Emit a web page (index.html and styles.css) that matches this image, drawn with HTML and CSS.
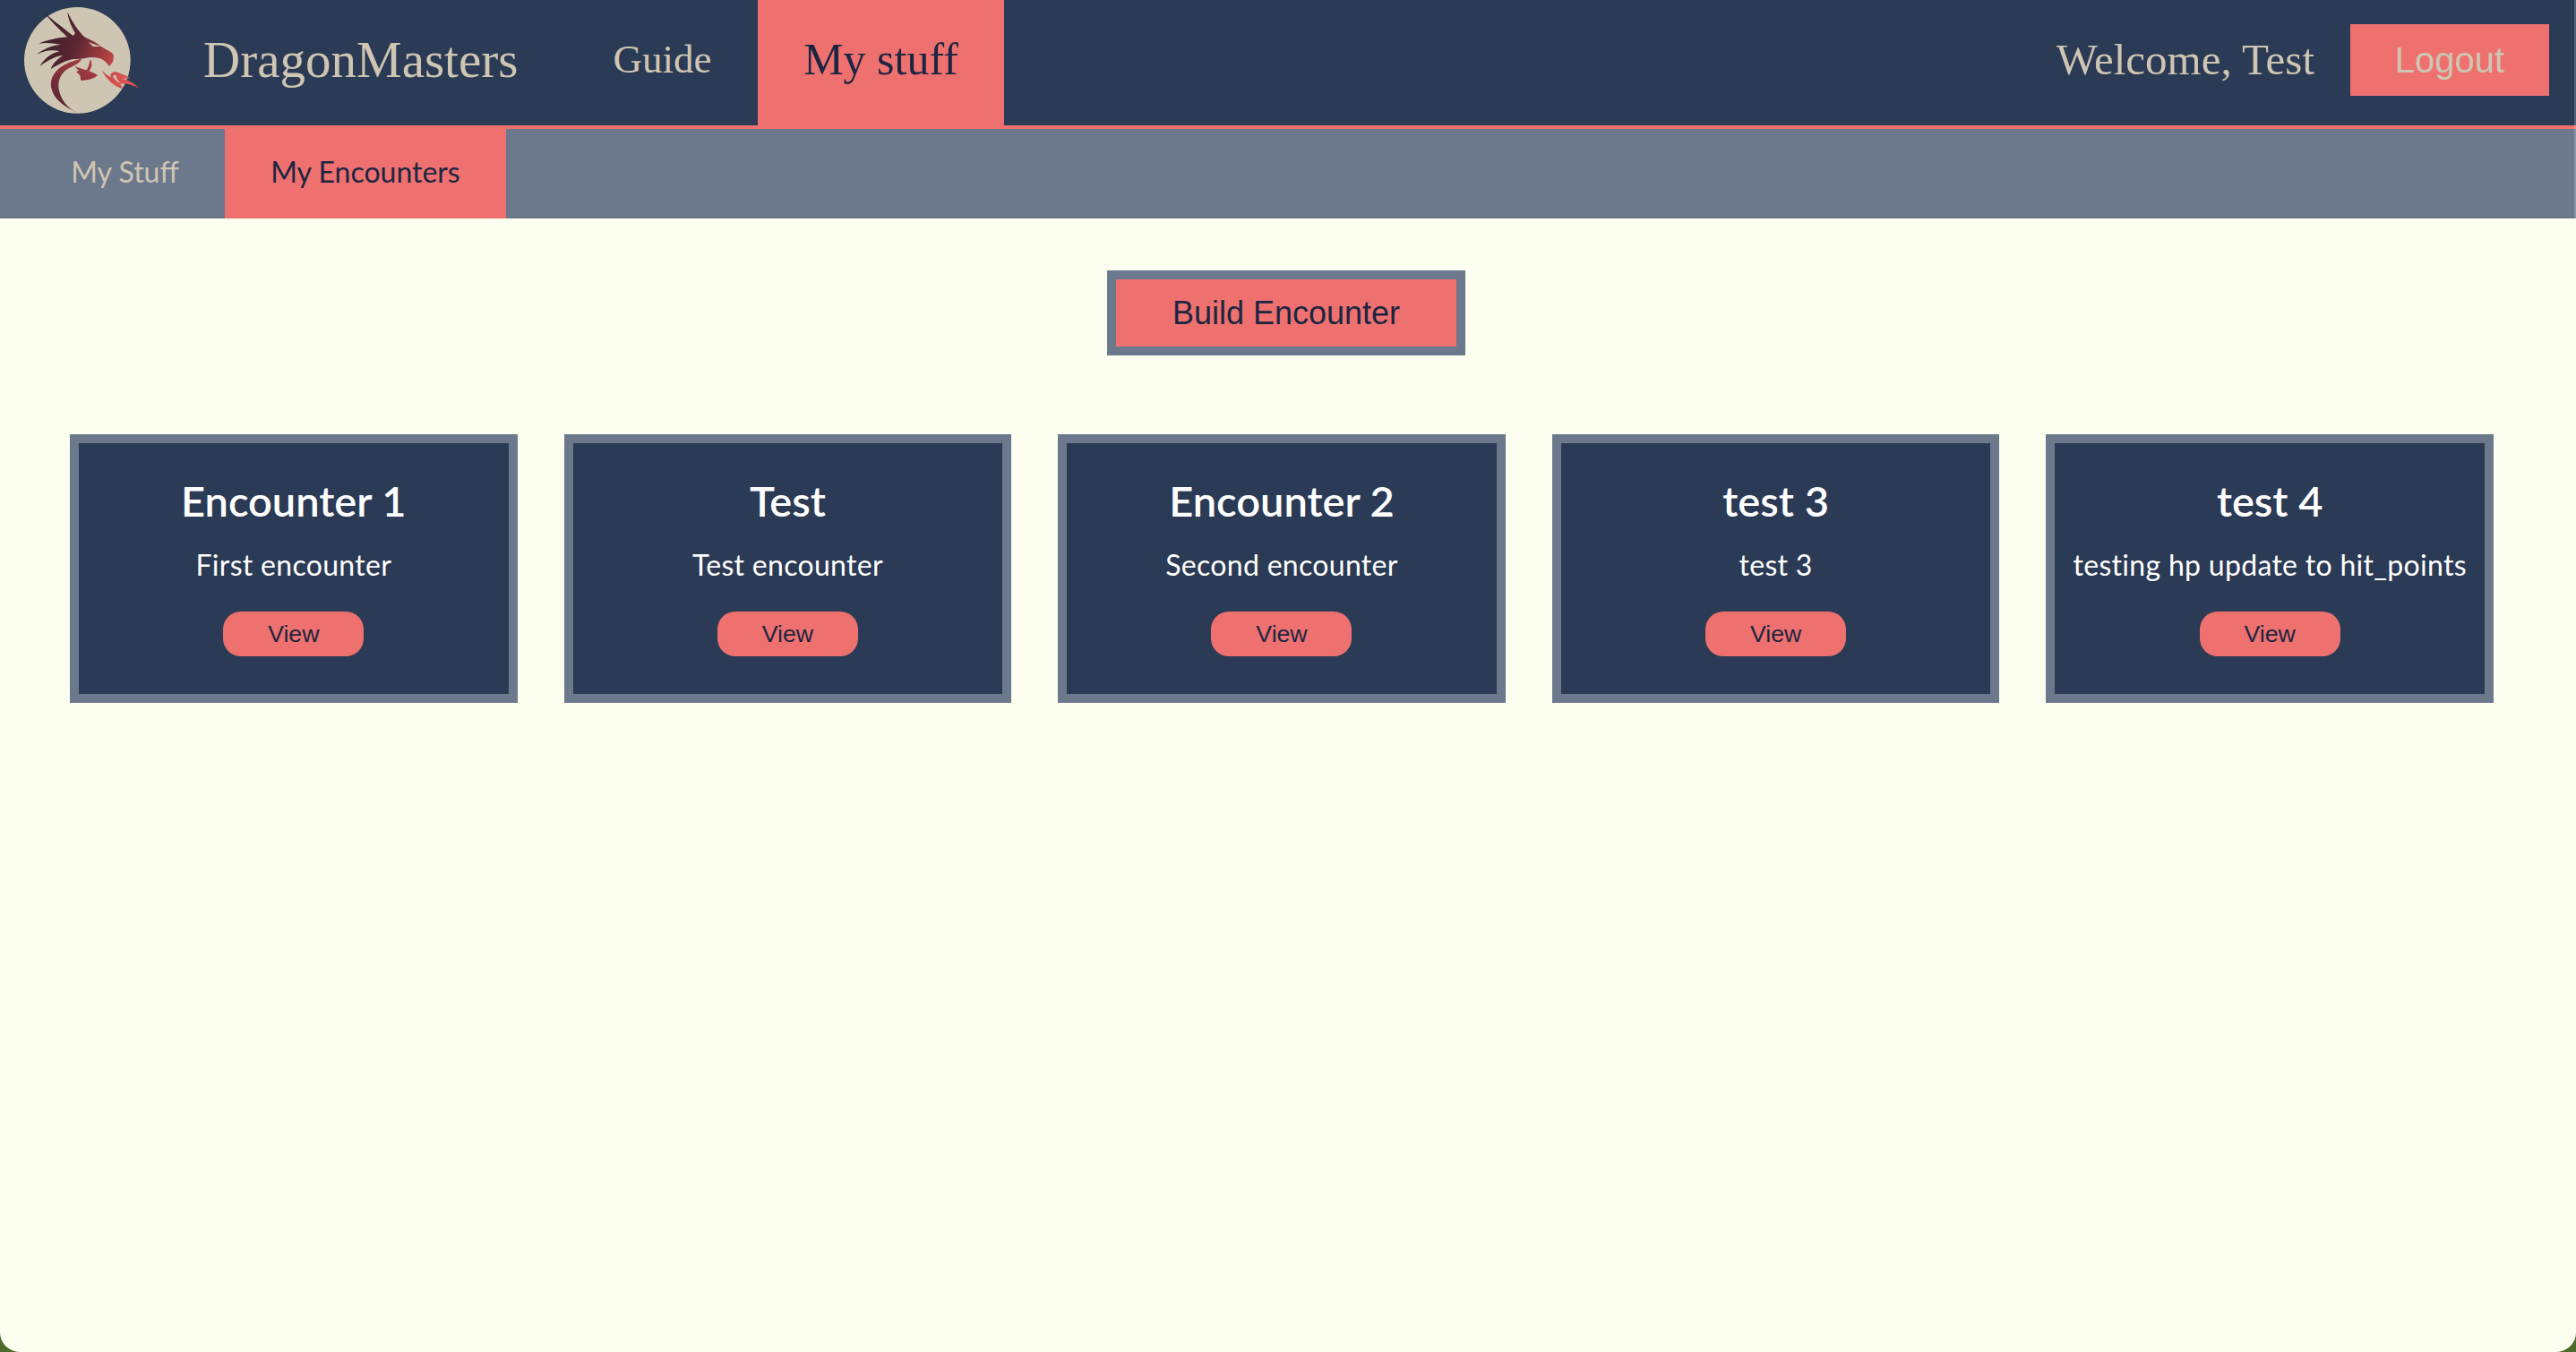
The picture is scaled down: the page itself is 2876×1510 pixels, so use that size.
FILE: index.html
```html
<!DOCTYPE html>
<html lang="en">
<head>
<meta charset="utf-8">
<title>DragonMasters</title>
<link rel="stylesheet" href="styles.css">
</head>
<body>
<div class="app">
  <header class="topbar">
    <a class="logo" href="#">
      <svg class="logo-svg" viewBox="0 0 510 435" width="170" height="145" aria-hidden="true">
        <defs>
          <linearGradient id="dragon" gradientUnits="userSpaceOnUse" x1="130" y1="130" x2="390" y2="220">
            <stop offset="0" stop-color="#3a1f2c"/>
            <stop offset="0.45" stop-color="#5c2632"/>
            <stop offset="1" stop-color="#c94a48"/>
          </linearGradient>
          <linearGradient id="tail" gradientUnits="userSpaceOnUse" x1="170" y1="380" x2="310" y2="200">
            <stop offset="0" stop-color="#4a2130"/>
            <stop offset="1" stop-color="#b03f42"/>
          </linearGradient>
          <linearGradient id="flame" gradientUnits="userSpaceOnUse" x1="340" y1="235" x2="467" y2="296">
            <stop offset="0" stop-color="#c9494a"/>
            <stop offset="1" stop-color="#e45a55"/>
          </linearGradient>
        </defs>
        <circle cx="259" cy="202" r="178" fill="#cec6b2"/>
        <path fill="url(#dragon)" d="M147 42C175 66 215 96 245 120L252 112C240 90 228 65 226 40C240 70 262 105 283 124C300 132 322 142 338 155C352 165 372 172 378 180C384 195 380 210 365 222C360 212 352 205 345 200C330 192 305 190 285 195C270 198 255 198 245 198C220 203 190 218 170 232C175 215 190 200 210 185C180 190 155 205 133 222C148 198 170 178 200 172C175 165 145 170 122 183C145 165 175 150 205 150C180 145 155 142 130 146C155 135 190 127 225 124C200 100 170 70 147 42Z"/>
        <path fill="#cec6b2" d="M296 141L338 156L312 156Z"/>
        <path fill="url(#tail)" d="M274 197C235 205 188 222 173 265C162 305 190 350 265 380C225 365 205 335 197 300C192 265 207 240 237 225C252 218 267 210 274 197Z"/>
        <path fill="url(#tail)" d="M303 198C310 212 308 228 298 238C310 243 320 247 327 252C318 262 300 268 271 270L268 252L255 240L264 237L250 222L278 232C286 236 292 234 294 228C298 218 300 208 303 198Z"/>
        <path fill="url(#flame)" fill-rule="evenodd" d="M340 235C352 247 362 256 372 258C368 250 372 243 384 240C402 243 420 253 437 262L410 264C432 268 452 282 467 296C445 284 425 278 404 281L412 298C385 292 360 270 340 235ZM378 256C384 268 394 276 404 280C396 272 388 262 388 250C384 252 380 253 378 256Z"/>
      </svg>
    </a>
    <nav class="main-nav">
      <a class="brand" href="#">DragonMasters</a>
      <a class="nav-link" href="#">Guide</a>
      <a class="nav-link nav-active" href="#">My stuff</a>
    </nav>
    <div class="user-area">
      <span class="welcome">Welcome, Test</span>
      <button class="logout" type="button">Logout</button>
    </div>
  </header>
  <nav class="subnav">
    <a class="sub-link" href="#">My Stuff</a>
    <a class="sub-link sub-active" href="#">My Encounters</a>
  </nav>
  <main class="content">
    <div class="build-row">
      <button class="build" type="button">Build Encounter</button>
    </div>
    <section class="cards">
      <article class="card">
        <h2 class="card-title">Encounter 1</h2>
        <p class="card-desc">First encounter</p>
        <button class="view" type="button">View</button>
      </article>
      <article class="card">
        <h2 class="card-title">Test</h2>
        <p class="card-desc">Test encounter</p>
        <button class="view" type="button">View</button>
      </article>
      <article class="card">
        <h2 class="card-title">Encounter 2</h2>
        <p class="card-desc">Second encounter</p>
        <button class="view" type="button">View</button>
      </article>
      <article class="card">
        <h2 class="card-title">test 3</h2>
        <p class="card-desc">test 3</p>
        <button class="view" type="button">View</button>
      </article>
      <article class="card">
        <h2 class="card-title">test 4</h2>
        <p class="card-desc">testing hp update to hit_points</p>
        <button class="view" type="button">View</button>
      </article>
    </section>
  </main>
</div>
</body>
</html>
```
FILE: styles.css
```css
html {
  height: 100%;
  background: #4c6a2a;
}
body {
  margin: 0;
  height: 100%;
  overflow: hidden;
}
a {
  text-decoration: none;
}
.app {
  position: relative;
  height: 100%;
  display: flex;
  flex-direction: column;
  background: #fcfff0;
  border-radius: 0 0 22px 22px;
  overflow: hidden;
}
.app::after {
  content: "";
  position: absolute;
  top: 0;
  right: 0;
  bottom: 0;
  width: 2px;
  background: rgba(255, 255, 255, 0.2);
}
.topbar {
  height: 140px;
  flex: none;
  display: flex;
  align-items: stretch;
  background: #2b3a55;
  border-bottom: 4px solid #ee716f;
  font-family: "Liberation Serif", serif;
  color: #cec6b2;
}
.logo {
  width: 170px;
  flex: none;
  display: flex;
  align-items: flex-start;
}
.logo-svg {
  display: block;
}
.main-nav {
  display: flex;
  align-items: stretch;
}
.brand {
  width: 463px;
  padding: 0 0 8px 57px;
  box-sizing: border-box;
  display: flex;
  align-items: center;
  color: #cec6b2;
  font-size: 57px;
}
.nav-link {
  width: 213px;
  padding-bottom: 8px;
  box-sizing: border-box;
  display: flex;
  align-items: center;
  justify-content: center;
  color: #cec6b2;
  font-size: 45px;
}
.nav-active {
  width: 275px;
  background: #ee716f;
  color: #1c2541;
  font-size: 50px;
}
.user-area {
  margin-left: auto;
  padding: 0 30px 6px 0;
  display: flex;
  align-items: center;
  gap: 40px;
}
.welcome {
  font-size: 49px;
  padding-bottom: 2px;
}
.logout {
  width: 222px;
  height: 80px;
  border: 0;
  padding: 0;
  background: #ee716f;
  color: #cec6b2;
  font-family: "Liberation Sans", sans-serif;
  font-size: 40px;
}
.subnav {
  height: 100px;
  flex: none;
  display: flex;
  padding-left: 28px;
  background: #6c788c;
  font-family: "Lato", sans-serif;
  font-size: 32px;
}
.sub-link {
  display: flex;
  align-items: center;
  justify-content: center;
  width: 223px;
  padding-bottom: 6px;
  box-sizing: border-box;
  color: #cec6b2;
}
.sub-active {
  width: 314px;
  background: #ee716f;
  color: #1c2541;
}
.content {
  flex: 1;
  padding: 58px 92px 0 78px;
}
.build-row {
  display: flex;
  justify-content: center;
  padding-left: 10px;
}
.build {
  width: 400px;
  height: 95px;
  border: 10px solid #6c788c;
  background: #ee716f;
  color: #1c2541;
  font-family: "Liberation Sans", sans-serif;
  font-size: 36px;
  padding: 0;
}
.cards {
  margin-top: 88px;
  display: grid;
  grid-template-columns: repeat(5, 1fr);
  gap: 52px;
}
.card {
  height: 300px;
  box-sizing: border-box;
  border: 10px solid #6c788c;
  background: #2b3a55;
  color: #fff;
  display: flex;
  flex-direction: column;
  align-items: center;
  font-family: "Lato", sans-serif;
}
.card-title {
  margin: 36px 0 0;
  font-size: 47px;
  line-height: 56px;
  font-weight: 600;
}
.card-desc {
  margin: 26px 0 0;
  font-size: 32px;
  line-height: 36px;
  letter-spacing: 0.3px;
}
.view {
  margin-top: 34px;
  width: 157px;
  height: 50px;
  border: 0;
  border-radius: 20px;
  padding: 0;
  background: #ee716f;
  color: #1c2541;
  font-family: "Liberation Sans", sans-serif;
  font-size: 26.67px;
}
```
